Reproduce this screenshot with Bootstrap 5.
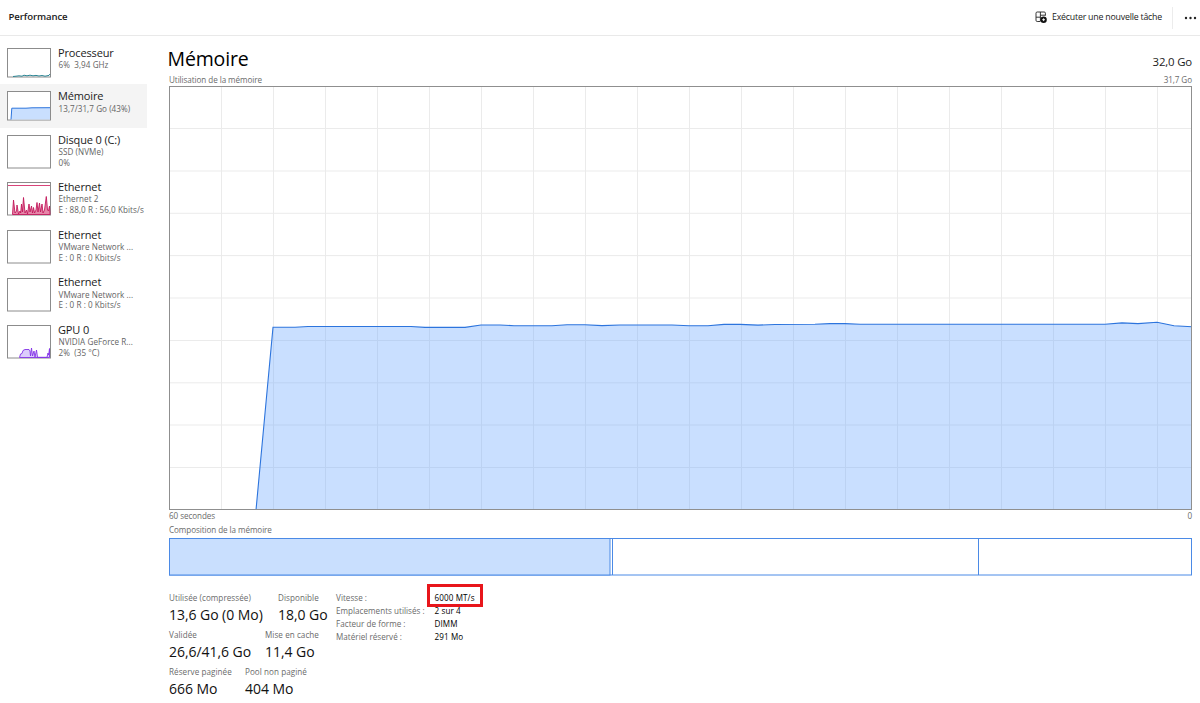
<!DOCTYPE html>
<html lang="fr">
<head>
<meta charset="utf-8">
<title>Performance</title>
<link href="https://cdn.jsdelivr.net/npm/bootstrap@5.3.0/dist/css/bootstrap.min.css" rel="stylesheet">
<style>
body{font-family:"Open Sans","Noto Sans",sans-serif;color:#1b1b1b;background:#fff;width:1200px;height:703px;overflow:hidden;white-space:nowrap}
.topbar{height:36px;border-bottom:1px solid #e9e9e9;padding-left:8.5px}
.page-name{font-size:9.6px;font-weight:600;letter-spacing:-.1px}
.run-task{font-size:8.8px;letter-spacing:-.21px;margin-left:4px;padding-top:1px}
.topsep{width:1px;height:22px;background:#ececec;margin:0 11px 0 10px}
.side{width:147px;padding-top:5px}
.perf-item{height:43.4px;padding:7px 0 0 7px}
.perf-item.tall{height:47.6px}
.perf-item.active{background:#f4f4f4}
.perf-item svg{display:block;flex:none;margin-right:7px}
.frame{fill:#fff;stroke:#8c8c8c}
.item-title{font-size:11px;line-height:13px;margin-top:-2.2px;margin-bottom:1.3px;letter-spacing:-.14px}
.item-sub{font-size:8.1px;line-height:10.8px;letter-spacing:.06px;color:#636363;padding-left:.5px}
.main{padding-left:22px;width:1045px}
.head{height:38px;padding-top:10px}
.big-title{font-size:19.5px;line-height:26px;color:#000;letter-spacing:-.15px;margin-left:-1.5px}
.total{font-size:11.4px;line-height:16px;letter-spacing:-.17px;padding-top:8px}
.cap{font-size:8.1px;line-height:11px;color:#6a6a6a}
.cap-tight{letter-spacing:-.07px}
.chart{width:1023px;height:424px;margin-top:1px}
.grid-lines{stroke:#ebebeb;fill:none}
.usage{fill:#69a5ff;fill-opacity:.36;stroke:#2c74dd;stroke-width:1.1}
.composition{margin-top:3px}
.stats{margin-top:16px}
.stat-row{height:37px}
.stats .cap{letter-spacing:.06px;line-height:12px}
.stat-val{font-size:14px;line-height:20px;color:#111;margin-top:.5px;letter-spacing:-.05px}
.details{margin-left:8.5px}
.detail{height:13px}
.stats .detail .cap{width:98.5px;letter-spacing:.02px}
.detail-val{font-size:8.1px;line-height:12px;letter-spacing:.1px;color:#000}
.hl{left:-7.2px;top:-8px;width:56px;height:23px;border:3px solid #e8161b}
</style>
<script src="https://cdn.jsdelivr.net/npm/bootstrap@5.3.0/dist/js/bootstrap.bundle.min.js"></script>
</head>
<body>
<header class="topbar d-flex align-items-center justify-content-between">
<div class="page-name">Performance</div>
<div class="d-flex align-items-center">
<svg width="13" height="13" viewBox="0 0 13 13" fill="none" stroke="#222" stroke-width=".9"><path d="M5 10.5H2.2Q1 10.5 1 9.3V2.2Q1 1 2.2 1H9.2Q10.4 1 10.4 2.2V4.6M5.4 1V10.5M1 6.2H5.4M5.4 4.2H10.4"/><circle cx="8.6" cy="8.7" r="3.2" fill="#111" stroke="none"/><path d="M7.2 8.7H10M8.6 7.3V10.1" stroke="#fff" stroke-width=".9"/></svg>
<div class="run-task">Exécuter une nouvelle tâche</div>
<div class="topsep"></div>
<svg width="16" height="4"><g fill="#222"><circle cx="2" cy="2" r="1.2"/><circle cx="6.5" cy="2" r="1.2"/><circle cx="11" cy="2" r="1.2"/></g></svg>
</div>
</header>
<div class="d-flex">
<nav class="side">
<div class="perf-item d-flex">
<svg width="44" height="30"><rect class="frame" x=".5" y=".5" width="43" height="28.5"/><path d="M6 28.5L9 28.2L12 27.8L15 28.2L17 27.2L20 27.8L23 27.2L26 27.8L29 27.4L32 28L35 27.5L38 28.2L40 27.8L42 27.4L43 26" fill="none" stroke="#2b8594" stroke-width="1"/></svg>
<div><div class="item-title">Processeur</div><div class="item-sub">6%&nbsp; 3,94 GHz</div></div></div>
<div class="perf-item d-flex active">
<svg width="44" height="30"><rect class="frame" x=".5" y=".5" width="43" height="28.5"/><path d="M4 28.5L4.8 17.2H19L25 16.8L43 16.7V28.5Z" fill="#c9dffe"/><path d="M4 28.5L4.8 17.2H19L25 16.8L43 16.7" fill="none" stroke="#2c74dd"/></svg>
<div><div class="item-title">Mémoire</div><div class="item-sub">13,7/31,7 Go (43%)</div></div></div>
<div class="perf-item tall d-flex">
<svg width="44" height="34"><rect class="frame" x=".5" y=".5" width="43" height="32.5"/></svg>
<div><div class="item-title">Disque 0 (C:)</div><div class="item-sub">SSD (NVMe)</div><div class="item-sub">0%</div></div></div>
<div class="perf-item tall d-flex">
<svg width="44" height="34"><rect class="frame" x=".5" y=".5" width="43" height="32.5"/><path d="M1 3.5H43" stroke="#d9447a"/><path d="M5.5 32.5L6.5 18L8 31L9.5 29L10 23L11.5 32L13 29L13.7 31L14.5 22L15.5 30L16.5 15.5L18 31L19.5 28L20.5 32L22 22L23 30L24.5 24L25.5 31L26.5 25.5L27.5 31L29 28L30 20.5L31 30L32.5 21L33.5 30L35 22L36 31L37.5 28L39.3 14.5L40.5 28L41.5 29L42.5 24L43 32.5Z" fill="#d9447a" fill-opacity=".65" stroke="#c2185b" stroke-width=".9"/></svg>
<div><div class="item-title">Ethernet</div><div class="item-sub">Ethernet 2</div><div class="item-sub">E : 88,0 R : 56,0 Kbits/s</div></div></div>
<div class="perf-item tall d-flex">
<svg width="44" height="34"><rect class="frame" x=".5" y=".5" width="43" height="32.5"/></svg>
<div><div class="item-title">Ethernet</div><div class="item-sub">VMware Network ...</div><div class="item-sub">E : 0 R : 0 Kbits/s</div></div></div>
<div class="perf-item tall d-flex">
<svg width="44" height="34"><rect class="frame" x=".5" y=".5" width="43" height="32.5"/></svg>
<div><div class="item-title">Ethernet</div><div class="item-sub">VMware Network ...</div><div class="item-sub">E : 0 R : 0 Kbits/s</div></div></div>
<div class="perf-item tall d-flex">
<svg width="44" height="34"><rect class="frame" x=".5" y=".5" width="43" height="32.5"/><path d="M12.5 32.5L13.5 29L15 28.5L16 25.5L18 24.5H22L23 26L23.5 31L24.5 23L25.5 31L27 26L28 32L29.5 25L30.5 32.3H40L41 28L41.7 30L42.5 23.5V32.5Z" fill="#dccdfb" stroke="#8333e6" stroke-width=".9"/></svg>
<div><div class="item-title">GPU 0</div><div class="item-sub">NVIDIA GeForce R...</div><div class="item-sub">2%&nbsp; (35 °C)</div></div></div>
</nav>
<main class="main">
<div class="head d-flex justify-content-between"><div class="big-title">Mémoire</div><div class="total">32,0 Go</div></div>
<div class="cap cap-tight d-flex justify-content-between"><span>Utilisation de la mémoire</span><span>31,7 Go</span></div>
<svg class="chart d-block" viewBox="169 86 1023 424">
<rect x="169" y="86" width="1023" height="424" fill="#fff"/>
<path class="grid-lines" d="M221.5 86V510M273.5 86V510M325.5 86V510M377.5 86V510M429.5 86V510M481.5 86V510M533.5 86V510M585.5 86V510M637.5 86V510M689.5 86V510M741.5 86V510M793.5 86V510M845.5 86V510M897.5 86V510M949.5 86V510M1001.5 86V510M1053.5 86V510M1105.5 86V510M1157.5 86V510M169 128.5H1192M169 171H1192M169 213.3H1192M169 255.6H1192M169 298H1192M169 340.5H1192M169 382.8H1192M169 425H1192M169 467.5H1192"/>
<path class="usage" d="M256 510L273 327.3H295L308 326.5H411L425 327.4H465L481 325H500L514 325.7H552L567 324.8H585L602 325.6L620 325H672L689 325.8H708L724 324.4H740L758 325.1L775 324.5L815 324.3L830 323.6H845L860 324.3H1105L1122 322.9L1138 323.6L1157 322.2L1174 325.7L1192 326.7V510Z"/>
<rect x="169.5" y="86.5" width="1022" height="423" fill="none" stroke="#8f8f8f"/>
</svg>
<div class="cap cap-tight d-flex justify-content-between pt-1px"><span>60 secondes</span><span>0</span></div>
<div class="cap cap-tight" style="margin-top:3px">Composition de la mémoire</div>
<svg class="composition d-block" width="1023" height="38" fill="none" stroke="#4b8ae6"><rect x=".5" y=".5" width="1022" height="36.5"/><rect x=".5" y=".5" width="440.5" height="36.5" fill="#c9dffe"/><path d="M443.5 0V37M809.5 0V37"/></svg>
<div class="stats d-flex">
<div>
<div class="stat-row d-flex"><div style="width:109px"><div class="cap">Utilisée (compressée)</div><div class="stat-val">13,6 Go (0 Mo)</div></div><div><div class="cap">Disponible</div><div class="stat-val">18,0 Go</div></div></div>
<div class="stat-row d-flex"><div style="width:96px"><div class="cap">Validée</div><div class="stat-val">26,6/41,6 Go</div></div><div><div class="cap">Mise en cache</div><div class="stat-val">11,4 Go</div></div></div>
<div class="stat-row d-flex"><div style="width:76px"><div class="cap">Réserve paginée</div><div class="stat-val">666 Mo</div></div><div><div class="cap">Pool non paginé</div><div class="stat-val">404 Mo</div></div></div>
</div>
<div class="details">
<div class="detail d-flex"><div class="cap">Vitesse :</div><div class="detail-val position-relative">6000 MT/s<span class="hl position-absolute"></span></div></div>
<div class="detail d-flex"><div class="cap">Emplacements utilisés :</div><div class="detail-val">2 sur 4</div></div>
<div class="detail d-flex"><div class="cap">Facteur de forme :</div><div class="detail-val">DIMM</div></div>
<div class="detail d-flex"><div class="cap">Matériel réservé :</div><div class="detail-val">291 Mo</div></div>
</div>
</div>
</main>
</div>
</body>
</html>
